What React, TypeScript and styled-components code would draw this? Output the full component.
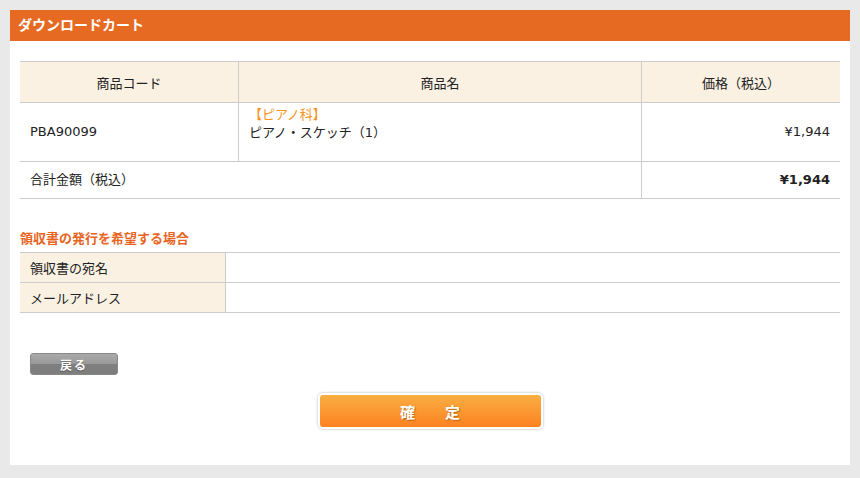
import styled, { createGlobalStyle } from 'styled-components';

const GlobalStyle = createGlobalStyle`
  html, body {
    margin: 0;
    padding: 0;
    background: #e9e9e9;
  }
  body {
    font-family: "DejaVu Sans", "Noto Sans CJK JP", sans-serif;
    font-size: 13px;
    color: #222;
  }
`;

const Page = styled.div`
  padding: 10px;
`;

const Panel = styled.div`
  background: #fff;
  height: 455px;
  box-sizing: border-box;
`;

const PanelHeader = styled.h1`
  margin: 0;
  height: 31px;
  line-height: 31px;
  padding-left: 8px;
  background: #e66a22;
  color: #fff;
  font-size: 14px;
  font-weight: bold;
`;

const PanelBody = styled.div`
  padding: 20px 10px 0;
`;

const CartTable = styled.table`
  width: 100%;
  border-collapse: collapse;
  table-layout: fixed;
  th, td {
    border: 1px solid #cccccc;
    padding: 0 10px;
  }
  tr > :first-child { border-left: none; }
  tr > :last-child { border-right: none; }
`;

const HeadCell = styled.th<{ $w?: number }>`
  width: ${({ $w }) => ($w ? `${$w}px` : 'auto')};
  height: 40px;
  background: #faf1e2;
  font-weight: normal;
  text-align: center;
`;

const Cell = styled.td<{ $align?: string; $h?: number; $bold?: boolean }>`
  height: ${({ $h }) => $h ?? 58}px;
  text-align: ${({ $align }) => $align ?? 'left'};
  font-weight: ${({ $bold }) => ($bold ? 'bold' : 'normal')};
  line-height: 18px;
`;

const NameCell = styled.td`
  vertical-align: top;
  padding-top: 3px !important;
  line-height: 18px;
`;

const Category = styled.div`
  color: #f7931e;
`;

const SectionTitle = styled.h2`
  margin: 31px 0 4px;
  color: #e8641e;
  font-size: 13px;
  font-weight: bold;
  line-height: 18px;
`;

const FormTable = styled.table`
  width: 100%;
  border-collapse: collapse;
  table-layout: fixed;
  th, td {
    border-top: 1px solid #cccccc;
    border-bottom: 1px solid #cccccc;
    height: 29px;
    padding: 0 10px;
  }
`;

const FormLabel = styled.th`
  width: 185px;
  background: #faf1e2;
  border-right: 1px solid #cccccc;
  font-weight: normal;
  text-align: left;
`;

const FormValue = styled.td``;

const Actions = styled.div`
  padding: 40px 20px 0;
  display: flex;
  flex-direction: column;
`;

const BackButton = styled.button`
  width: 88px;
  height: 22px;
  padding: 0;
  border: 1px solid #888;
  border-radius: 3px;
  background: linear-gradient(#a9a9a9 0%, #9a9a9a 48%, #7f7f7f 52%, #7d7d7d 100%);
  color: #fff;
  font-family: "Noto Sans CJK JP", sans-serif;
  font-size: 12px;
  font-weight: bold;
  letter-spacing: 2px;
  text-shadow: 0 1px 1px rgba(0, 0, 0, 0.3);
  cursor: pointer;
`;

const ConfirmWrap = styled.div`
  display: flex;
  justify-content: center;
  margin-top: 18px;
`;

const ConfirmButton = styled.button`
  width: 225px;
  height: 36px;
  padding: 0;
  border: 2px solid #fff;
  border-radius: 5px;
  box-shadow: 0 0 2px 1px #dcdcdc;
  background: linear-gradient(#f8ae42, #fd8220);
  color: #fff;
  font-family: "Noto Sans CJK JP", sans-serif;
  font-size: 15px;
  font-weight: bold;
  text-shadow: 1px 1px 1px rgba(120, 60, 0, 0.5);
  white-space: pre;
  cursor: pointer;
`;

export default function App() {
  return (
    <>
      <GlobalStyle />
      <Page>
        <Panel>
          <PanelHeader>ダウンロードカート</PanelHeader>
          <PanelBody>
            <CartTable>
              <thead>
                <tr>
                  <HeadCell $w={198}>商品コード</HeadCell>
                  <HeadCell>商品名</HeadCell>
                  <HeadCell $w={178}>価格（税込）</HeadCell>
                </tr>
              </thead>
              <tbody>
                <tr>
                  <Cell>PBA90099</Cell>
                  <NameCell>
                    <Category>【ピアノ科】</Category>
                    <div>ピアノ・スケッチ（1）</div>
                  </NameCell>
                  <Cell $align="right">¥1,944</Cell>
                </tr>
                <tr>
                  <Cell colSpan={2} $h={36}>合計金額（税込）</Cell>
                  <Cell $align="right" $h={36} $bold>¥1,944</Cell>
                </tr>
              </tbody>
            </CartTable>

            <SectionTitle>領収書の発行を希望する場合</SectionTitle>
            <FormTable>
              <tbody>
                <tr>
                  <FormLabel>領収書の宛名</FormLabel>
                  <FormValue />
                </tr>
                <tr>
                  <FormLabel>メールアドレス</FormLabel>
                  <FormValue />
                </tr>
              </tbody>
            </FormTable>
          </PanelBody>
          <Actions>
            <div>
              <BackButton>戻る</BackButton>
            </div>
            <ConfirmWrap>
              <ConfirmButton>{'確　　定'}</ConfirmButton>
            </ConfirmWrap>
          </Actions>
        </Panel>
      </Page>
    </>
  );
}
